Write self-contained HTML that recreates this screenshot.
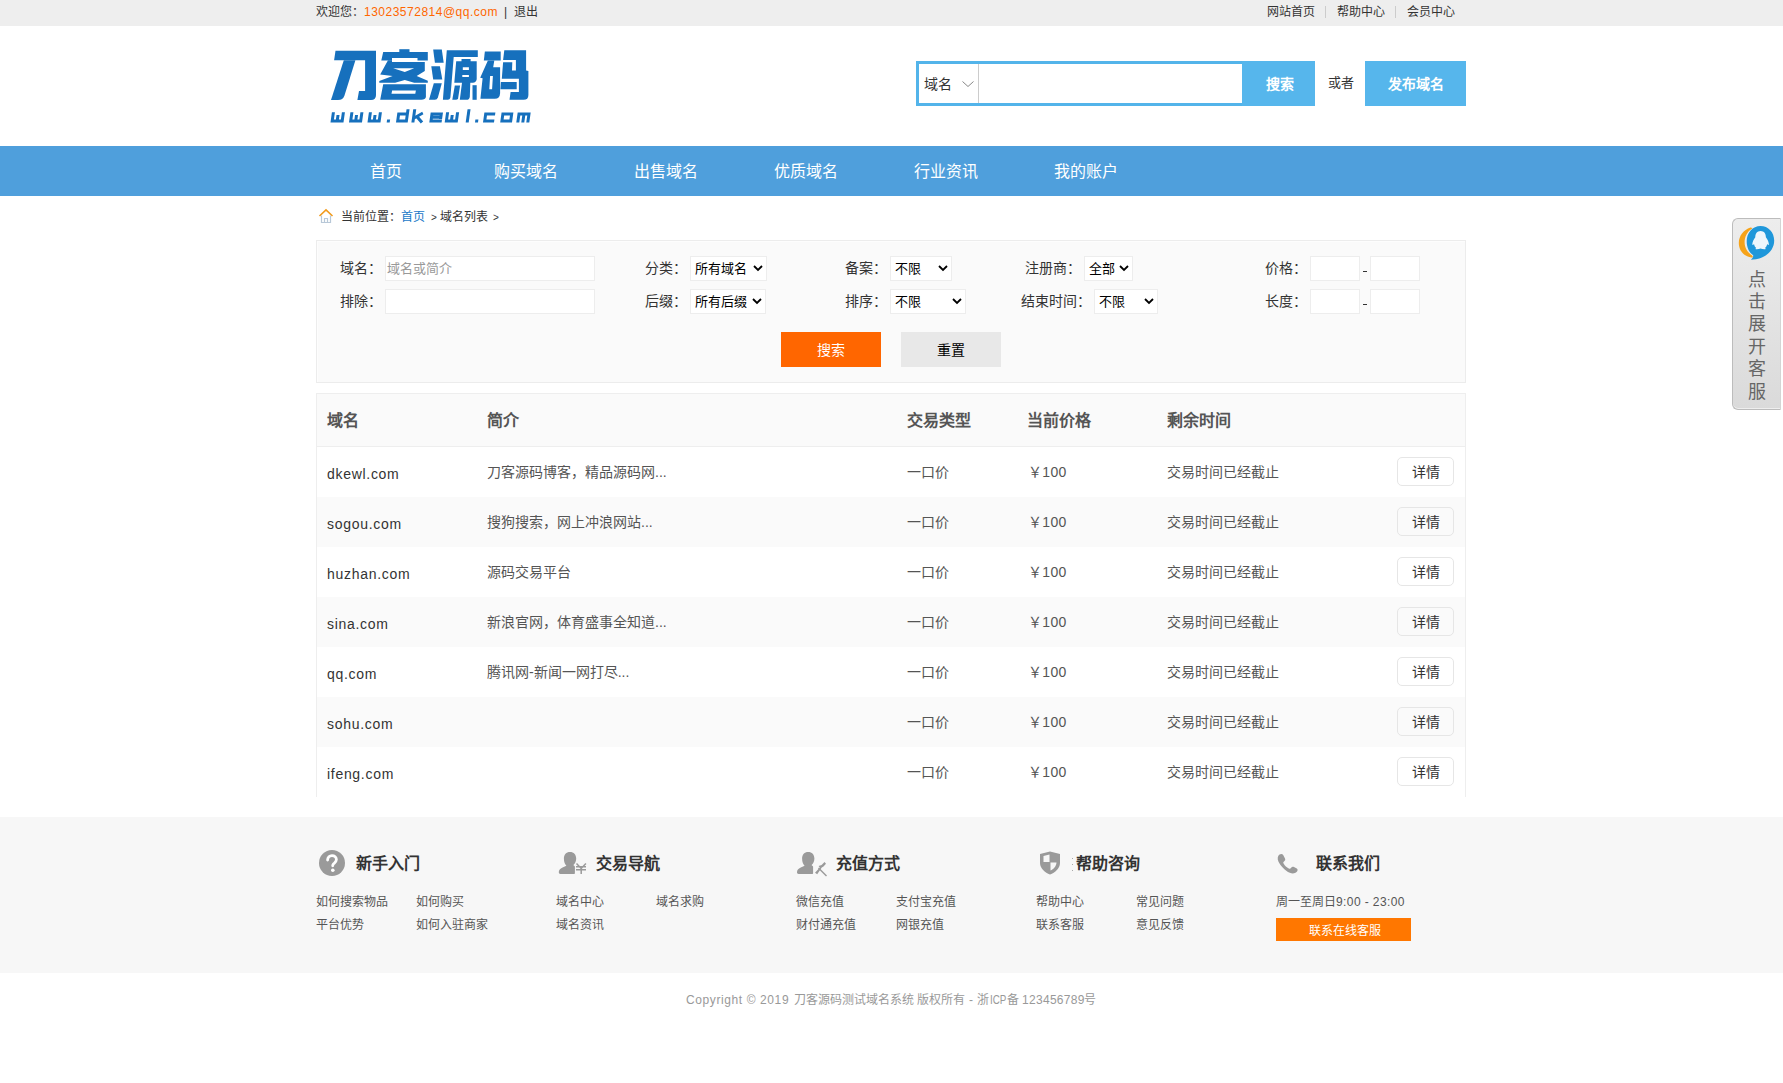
<!DOCTYPE html>
<html lang="zh-CN"><head><meta charset="utf-8">
<style>
*{margin:0;padding:0;box-sizing:border-box}
html,body{width:1783px;height:1083px;overflow:hidden;background:#fff}
body{font-family:"Liberation Sans",sans-serif;color:#333;position:relative;font-size:12px}
.abs{position:absolute;white-space:nowrap}
#top{position:absolute;left:0;top:0;width:1783px;height:26px;background:#eee}
#hdr{position:absolute;left:0;top:26px;width:1783px;height:120px;background:#fff}
#nav{position:absolute;left:0;top:146px;width:1783px;height:50px;background:#4f9fdc}
.nv{position:absolute;top:0;height:50px;line-height:52px;width:140px;text-align:center;color:#fff;font-size:16px}
#filter{position:absolute;left:316px;top:240px;width:1150px;height:143px;background:#fafafa;border:1px solid #ececec;box-shadow:inset 1px 1px 0 #fdfdfd}
.lbl{position:absolute;font-size:14px;color:#333;line-height:25px;white-space:nowrap}
.inp{position:absolute;background:#fff;border:1px solid #ededed;height:25px}
.sel{position:absolute;background:#fff;border:1px solid #ededed;height:25px;font-size:13px;line-height:23px;padding-left:4px;color:#000;white-space:nowrap}
.sel svg{position:absolute;top:8px}
#tbl{position:absolute;left:316px;top:393px;width:1150px;height:404px;border:1px solid #eee;border-bottom:none}
.th{position:absolute;top:0;height:53px;line-height:53px;font-size:16px;font-weight:bold;color:#555}
.row{position:absolute;left:0;width:1148px;height:50px}
.row.alt{background:#fafafa}
.cell{position:absolute;top:0;line-height:50px;font-size:14px;color:#555;white-space:nowrap}
.lat{letter-spacing:0.7px}
.btnd{position:absolute;left:1080px;top:10px;width:57px;height:29px;border:1px solid #e6e6e6;border-radius:5px;font-size:14px;line-height:28px;text-align:center;color:#333}
#foot{position:absolute;left:0;top:817px;width:1783px;height:156px;background:#f7f7f7}
.ft{position:absolute;font-size:16px;font-weight:bold;color:#333;white-space:nowrap;line-height:24px;margin:1px 0 0 0}
.fl{position:absolute;font-size:12px;color:#555;white-space:nowrap;line-height:16px;margin-top:2px}
</style></head>
<body>
<div id="top">
  <div class="abs" style="left:316px;top:0;line-height:24px;font-size:12px;color:#333">欢迎您：<span style="color:#ff6600;letter-spacing:0.5px">13023572814@qq.com</span><span style="margin-left:6px">|</span><span style="margin-left:7px">退出</span></div>
  <div class="abs" style="left:1267px;top:0;line-height:24px;font-size:12px;color:#333">网站首页</div>
  <div class="abs" style="left:1325px;top:6px;width:1px;height:12px;background:#ccc"></div>
  <div class="abs" style="left:1337px;top:0;line-height:24px;font-size:12px;color:#333">帮助中心</div>
  <div class="abs" style="left:1395px;top:6px;width:1px;height:12px;background:#ccc"></div>
  <div class="abs" style="left:1407px;top:0;line-height:24px;font-size:12px;color:#333">会员中心</div>
</div>
<div id="hdr"></div>
<!-- logo -->
<svg class="abs" style="left:0;top:0" width="560" height="140" viewBox="0 0 560 140"><g fill="#1670bd" fill-rule="evenodd">
<path d="M335.5,50.8 H376 V95 Q376,100 371,100 H357.4 L359,91 H365.1 V60.2 H334.1 Z"/>
<path d="M343.8,60.2 H355.4 L344.5,95.5 Q343,100 338,100 H331 Z"/>
<path d="M399.3,49.2 H409.5 V52.5 H399.3 Z"/>
<path d="M383.2,51.9 H427.8 V60.5 H417.5 V58 H392 V60.5 H381.3 Z"/>
<path d="M388,60.3 L392,60.3 L392,62 L424.8,62 L424.8,71 L416.7,76 L427.8,80.7 L427.8,82.7 L414.2,82.7 L404.8,79.9 L395.1,82.7 L379.3,82.7 L379.3,81 L392.6,76 L380.2,74.4 Z M393.2,68.3 L414.2,68.3 L404.8,72.1 Z"/>
<path d="M383.2,84.3 L425.9,84.3 L425.9,97.1 Q425.3,99.8 421.4,99.8 L380.2,99.8 Z M392.1,90.4 L415.9,90.4 L415.3,93.8 L391.5,93.8 Z"/>
<path d="M433.2,49.4 L441.8,49.4 L443.7,62.7 L434.9,62.7 Z"/>
<path d="M431.3,66.3 L439.9,66.3 L442.3,79.6 L433.2,79.6 Z"/>
<path d="M433.8,83.2 L441.8,83.2 L437.9,97.6 Q437.1,99.8 434.9,99.8 L429,99.8 Z"/>
<path d="M446.8,50.3 L477.8,50.3 L477.8,56.9 L453.7,56.9 L450.4,97.6 Q449.8,99.8 447.9,99.8 L442.9,99.8 Z"/>
<path d="M456.2,61.3 L461.5,61.3 L461.5,59.1 L470.6,59.1 L470.6,61.3 L476.7,61.3 L476.7,79.3 Q476.1,82.7 472.8,82.7 L470.3,82.7 L469.8,96.9 Q469.2,99.8 466.4,99.8 L459.8,99.8 L462,82.7 L454.3,82.7 Z M462.8,67.2 L468.9,67.2 L468.9,69.9 L462.8,69.9 Z M462.3,74.9 L468.9,74.9 L468.9,77.1 L462.3,77.1 Z"/>
<path d="M454.8,85.4 L460.1,85.4 L458.1,98.2 Q457.6,99.8 455.9,99.8 L452.3,99.8 Z"/>
<path d="M472.5,85.2 L476.7,85.2 L476.7,99.8 L472.5,99.8 Z"/>
<path d="M484.9,51.4 L500.7,51.4 L500.7,60.5 L483.8,60.5 Z"/>
<path d="M487.9,60.5 L494.3,60.5 L493.2,67.2 L500.1,67.2 L500.1,93.2 Q499.8,98.7 494.8,98.7 L480.4,98.7 L482.6,78.2 L480.2,77.7 Z M490.1,76 L492.9,76 L492.1,89.3 L489.3,89.3 Z"/>
<path d="M504.3,50.3 L526.1,50.3 L526.1,70.5 L528.4,71 L528.4,94.9 Q528.4,99.8 523.6,99.8 L509.5,99.8 L510.6,92.1 L518.9,92.1 L518.9,78.8 L501.8,78.8 L503.1,62.2 L512.3,62.2 L512,70.5 L515.9,70.5 L515.9,60 L503.1,60 Z"/>
<path d="M500.9,82.1 L516.7,82.1 L516.7,89.3 L500.4,89.3 Z"/>
</g>
<g transform="translate(17.2,0) skewX(-8)" fill="none" stroke="#1670bd" stroke-width="3"><path d="M332.0,112.3 V121 H342.0 V112.3 M337.0,115 V121"/><path d="M350.5,112.3 V121 H360.5 V112.3 M355.5,115 V121"/><path d="M369.0,112.3 V121 H379.0 V112.3 M374.0,115 V121"/><path d="M446.2,112.3 V121 H456.2 V112.3 M451.2,115 V121"/><path d="M406.2,109.3 V121 H397.5 V114 H406.2"/><path d="M412.9,109.3 V122.5 M413.5,118 L421.5,113 M416.5,117 L422,122.5"/><path d="M440.1,119 V114 H430.8 V121 H441.6 M430.8,117.3 H440.1"/><path d="M467.2,109.3 V122.5"/><path d="M494,114 H484.5 V121 H494"/><path d="M501.7,114 H510.5 V121 H501.7 Z"/><path d="M517.8,122.5 V114 H527.8 V122.5 M522.8,114 V122.5"/><rect x="386.7" y="119.5" width="3" height="3" fill="#1670bd" stroke="none"/><rect x="475" y="119.5" width="3" height="3" fill="#1670bd" stroke="none"/></g>
</svg>
<!-- search -->
<div class="abs" style="left:916px;top:61px;width:399px;height:45px;border:3px solid #53b4ea;background:#fff"></div>
<div class="abs" style="left:978px;top:64px;width:1px;height:39px;background:#ccc"></div>
<div class="abs" style="left:924px;top:62px;line-height:45px;font-size:14px;color:#333">域名</div>
<svg class="abs" style="left:962px;top:81px" width="12" height="7" viewBox="0 0 12 7"><path d="M0.5 0.5 L6 5.5 L11.5 0.5" fill="none" stroke="#888" stroke-width="1"/></svg>
<div class="abs" style="left:1242px;top:61px;width:73px;height:45px;background:#56b6ec;color:#fff;font-weight:bold;font-size:14px;line-height:47px;text-align:center;padding-left:2px">搜索</div>
<div class="abs" style="left:1328px;top:61px;line-height:44px;font-size:13px;color:#333">或者</div>
<div class="abs" style="left:1365px;top:61px;width:101px;height:45px;background:#56b6ec;color:#fff;font-weight:bold;font-size:14px;line-height:47px;text-align:center">发布域名</div>

<div id="nav">
  <div class="nv" style="left:316px">首页</div>
  <div class="nv" style="left:456px">购买域名</div>
  <div class="nv" style="left:596px">出售域名</div>
  <div class="nv" style="left:736px">优质域名</div>
  <div class="nv" style="left:876px">行业资讯</div>
  <div class="nv" style="left:1016px">我的账户</div>
</div>

<!-- breadcrumb -->
<svg class="abs" style="left:318px;top:208px" width="16" height="16" viewBox="0 0 16 16"><path d="M1.5 8 L8 1.8 L14.5 8" fill="none" stroke="#f29b1d" stroke-width="1.6"/><path d="M3.5 7.5 V14.5 H12.5 V7.5 M6.5 14.5 V10.5 H9.5 V14.5" fill="none" stroke="#b8c8d8" stroke-width="1.2"/></svg>
<div class="abs" style="left:341px;top:209px;line-height:16px;font-size:12px;color:#333">当前位置：</div>
<div class="abs" style="left:401px;top:209px;line-height:16px;font-size:12px;color:#1a78c8">首页</div>
<div class="abs" style="left:431px;top:210px;line-height:16px;font-size:10px;color:#333">&gt;</div>
<div class="abs" style="left:440px;top:209px;line-height:16px;font-size:12px;color:#333">域名列表</div>
<div class="abs" style="left:493px;top:210px;line-height:16px;font-size:10px;color:#333">&gt;</div>

<div id="filter"></div>
<div class="lbl" style="left:340px;top:256px">域名：</div>
<div class="inp" style="left:385px;top:256px;width:210px;font-size:13px;line-height:23px;color:#999;padding-left:1px">域名或简介</div>
<div class="lbl" style="left:340px;top:289px">排除：</div>
<div class="inp" style="left:385px;top:289px;width:210px"></div>

<div class="lbl" style="left:645px;top:256px">分类：</div>
<div class="sel" style="left:690px;top:256px;width:77px">所有域名<svg style="left:62px" width="10" height="7" viewBox="0 0 10 7"><path d="M1 1 L5 5 L9 1" fill="none" stroke="#000" stroke-width="1.8"/></svg></div>
<div class="lbl" style="left:645px;top:289px">后缀：</div>
<div class="sel" style="left:690px;top:289px;width:76px">所有后缀<svg style="left:61px" width="10" height="7" viewBox="0 0 10 7"><path d="M1 1 L5 5 L9 1" fill="none" stroke="#000" stroke-width="1.8"/></svg></div>

<div class="lbl" style="left:845px;top:256px">备案：</div>
<div class="sel" style="left:890px;top:256px;width:62px">不限<svg style="left:47px" width="10" height="7" viewBox="0 0 10 7"><path d="M1 1 L5 5 L9 1" fill="none" stroke="#000" stroke-width="1.8"/></svg></div>
<div class="lbl" style="left:845px;top:289px">排序：</div>
<div class="sel" style="left:890px;top:289px;width:76px">不限<svg style="left:61px" width="10" height="7" viewBox="0 0 10 7"><path d="M1 1 L5 5 L9 1" fill="none" stroke="#000" stroke-width="1.8"/></svg></div>

<div class="lbl" style="left:1025px;top:256px">注册商：</div>
<div class="sel" style="left:1084px;top:256px;width:49px">全部<svg style="left:34px" width="10" height="7" viewBox="0 0 10 7"><path d="M1 1 L5 5 L9 1" fill="none" stroke="#000" stroke-width="1.8"/></svg></div>
<div class="lbl" style="left:1021px;top:289px">结束时间：</div>
<div class="sel" style="left:1094px;top:289px;width:64px">不限<svg style="left:49px" width="10" height="7" viewBox="0 0 10 7"><path d="M1 1 L5 5 L9 1" fill="none" stroke="#000" stroke-width="1.8"/></svg></div>

<div class="lbl" style="left:1265px;top:256px">价格：</div>
<div class="inp" style="left:1310px;top:256px;width:50px"></div>
<div class="abs" style="left:1363px;top:271px;width:4px;height:1px;background:#333"></div>
<div class="inp" style="left:1370px;top:256px;width:50px"></div>
<div class="lbl" style="left:1265px;top:289px">长度：</div>
<div class="inp" style="left:1310px;top:289px;width:50px"></div>
<div class="abs" style="left:1363px;top:304px;width:4px;height:1px;background:#333"></div>
<div class="inp" style="left:1370px;top:289px;width:50px"></div>

<div class="abs" style="left:781px;top:332px;width:100px;height:35px;background:#ff6600;color:#fff;font-size:14px;line-height:37px;text-align:center">搜索</div>
<div class="abs" style="left:901px;top:332px;width:100px;height:35px;background:#e8e8e8;color:#000;font-size:14px;line-height:37px;text-align:center">重置</div>

<div id="tbl">
  <div class="abs" style="left:0;top:0;width:1148px;height:52px;background:#fafafa"></div>
  <div class="th" style="left:10px">域名</div>
  <div class="th" style="left:170px">简介</div>
  <div class="th" style="left:590px">交易类型</div>
  <div class="th" style="left:710px">当前价格</div>
  <div class="th" style="left:850px">剩余时间</div>
  <div class="abs" style="left:0;top:52px;width:1148px;height:1px;background:#eee"></div>
  <div class="row" style="top:53px"><div class="cell lat" style="left:10px;color:#333;top:1.5px">dkewl.com</div><div class="cell" style="left:170px">刀客源码博客，精品源码网...</div><div class="cell" style="left:590px">一口价</div><div class="cell" style="left:711px;top:0;letter-spacing:0.3px">￥100</div><div class="cell" style="left:850px">交易时间已经截止</div><div class="btnd">详情</div></div>
  <div class="row alt" style="top:103px"><div class="cell lat" style="left:10px;color:#333;top:1.5px">sogou.com</div><div class="cell" style="left:170px">搜狗搜索，网上冲浪网站...</div><div class="cell" style="left:590px">一口价</div><div class="cell" style="left:711px;top:0;letter-spacing:0.3px">￥100</div><div class="cell" style="left:850px">交易时间已经截止</div><div class="btnd">详情</div></div>
  <div class="row" style="top:153px"><div class="cell lat" style="left:10px;color:#333;top:1.5px">huzhan.com</div><div class="cell" style="left:170px">源码交易平台</div><div class="cell" style="left:590px">一口价</div><div class="cell" style="left:711px;top:0;letter-spacing:0.3px">￥100</div><div class="cell" style="left:850px">交易时间已经截止</div><div class="btnd">详情</div></div>
  <div class="row alt" style="top:203px"><div class="cell lat" style="left:10px;color:#333;top:1.5px">sina.com</div><div class="cell" style="left:170px">新浪官网，体育盛事全知道...</div><div class="cell" style="left:590px">一口价</div><div class="cell" style="left:711px;top:0;letter-spacing:0.3px">￥100</div><div class="cell" style="left:850px">交易时间已经截止</div><div class="btnd">详情</div></div>
  <div class="row" style="top:253px"><div class="cell lat" style="left:10px;color:#333;top:1.5px">qq.com</div><div class="cell" style="left:170px">腾讯网-新闻一网打尽...</div><div class="cell" style="left:590px">一口价</div><div class="cell" style="left:711px;top:0;letter-spacing:0.3px">￥100</div><div class="cell" style="left:850px">交易时间已经截止</div><div class="btnd">详情</div></div>
  <div class="row alt" style="top:303px"><div class="cell lat" style="left:10px;color:#333;top:1.5px">sohu.com</div><div class="cell" style="left:170px"></div><div class="cell" style="left:590px">一口价</div><div class="cell" style="left:711px;top:0;letter-spacing:0.3px">￥100</div><div class="cell" style="left:850px">交易时间已经截止</div><div class="btnd">详情</div></div>
  <div class="row" style="top:353px"><div class="cell lat" style="left:10px;color:#333;top:1.5px">ifeng.com</div><div class="cell" style="left:170px"></div><div class="cell" style="left:590px">一口价</div><div class="cell" style="left:711px;top:0;letter-spacing:0.3px">￥100</div><div class="cell" style="left:850px">交易时间已经截止</div><div class="btnd">详情</div></div>
</div>

<div id="foot"></div>
<!-- footer columns -->
<svg class="abs" style="left:319px;top:850px" width="26" height="26" viewBox="0 0 26 26"><circle cx="13" cy="13" r="13" fill="#9a9a9a"/><path d="M8.6,10 C8.6,7.2 10.6,5.6 13,5.6 C15.6,5.6 17.4,7.3 17.4,9.5 C17.4,11.6 15.8,12.6 14.6,13.8 C13.9,14.5 13.7,15.1 13.7,15.8" fill="none" stroke="#fff" stroke-width="2.8" stroke-linecap="round"/><circle cx="13.8" cy="20.3" r="1.8" fill="#fff"/></svg>
<div class="ft" style="left:356px;top:851px">新手入门</div>
<div class="fl" style="left:316px;top:892px">如何搜索物品</div>
<div class="fl" style="left:416px;top:892px">如何购买</div>
<div class="fl" style="left:316px;top:915px">平台优势</div>
<div class="fl" style="left:416px;top:915px">如何入驻商家</div>

<svg class="abs" style="left:558px;top:851px" width="30" height="26" viewBox="0 0 30 26"><path d="M12,0.9 C15.8,0.9 18.2,3.6 18.2,7.4 C18.2,10.4 17,12.4 15.6,13.7 L15.6,14.4 C16.4,14.7 16.9,15.1 16.9,15.8 L16.9,21.9 C16.9,22.5 16.5,22.9 15.9,22.9 L2.4,22.9 C1.4,22.9 0.8,22.2 0.8,21.2 C0.8,19 2,17.6 4.6,16.5 L8.4,14.8 C7,13.3 5.9,10.8 5.9,7.4 C5.9,3.6 8.2,0.9 12,0.9 Z" fill="#9a9a9a"/><path d="M18.5 12.4 L23.2 17.4 L27.9 12.4 M23.2 17.4 V22.9 M18 15.8 H28 M18 18.8 H28" fill="none" stroke="#9a9a9a" stroke-width="1.5"/></svg>
<div class="ft" style="left:596px;top:851px">交易导航</div>
<div class="fl" style="left:556px;top:892px">域名中心</div>
<div class="fl" style="left:656px;top:892px">域名求购</div>
<div class="fl" style="left:556px;top:915px">域名资讯</div>

<svg class="abs" style="left:797px;top:851px" width="30" height="26" viewBox="0 0 30 26"><g transform="translate(-0.8,0)"><path d="M12,0.9 C15.8,0.9 18.2,3.6 18.2,7.4 C18.2,10.4 17,12.4 15.6,13.7 L15.6,14.4 C16.4,14.7 16.9,15.1 16.9,15.8 L16.9,21.9 C16.9,22.5 16.5,22.9 15.9,22.9 L2.4,22.9 C1.4,22.9 0.8,22.2 0.8,21.2 C0.8,19 2,17.6 4.6,16.5 L8.4,14.8 C7,13.3 5.9,10.8 5.9,7.4 C5.9,3.6 8.2,0.9 12,0.9 Z" fill="#9a9a9a"/></g><path d="M21.5 17 L29.5 25" stroke="#9a9a9a" stroke-width="1.4"/><path d="M18 21.8 L22.8 16.4 L21.6 14.9 L24.6 13.9 L27.5 11 L29 12.8 L26.5 15.6 L24.8 16.6 L20.2 23.2 Z" fill="#9a9a9a"/></svg>
<div class="ft" style="left:836px;top:851px">充值方式</div>
<div class="fl" style="left:796px;top:892px">微信充值</div>
<div class="fl" style="left:896px;top:892px">支付宝充值</div>
<div class="fl" style="left:796px;top:915px">财付通充值</div>
<div class="fl" style="left:896px;top:915px">网银充值</div>

<svg class="abs" style="left:1039px;top:851px" width="22" height="24" viewBox="0 0 22 24"><path d="M11 0.5 L21 3 L21 12 C21 17.5 16 21.5 11 23.5 C6 21.5 1 17.5 1 12 L1 3 Z" fill="#9a9a9a"/><path d="M4.5 5 L10.5 3.6 L10.5 11 L4.5 11 Z M11.5 11.5 L17.5 11.5 C17.2 15.5 14.5 18.2 11.5 19.6 Z" fill="#f7f7f7"/></svg>
<div class="ft" style="left:1076px;top:851px">帮助咨询</div>
<div class="abs" style="left:1072px;top:858px;width:1px;height:1px;background:#aaa"></div><div class="abs" style="left:1072px;top:864px;width:1px;height:1px;background:#aaa"></div><div class="abs" style="left:1072px;top:870px;width:1px;height:1px;background:#aaa"></div>
<div class="fl" style="left:1036px;top:892px">帮助中心</div>
<div class="fl" style="left:1136px;top:892px">常见问题</div>
<div class="fl" style="left:1036px;top:915px">联系客服</div>
<div class="fl" style="left:1136px;top:915px">意见反馈</div>

<svg class="abs" style="left:1277px;top:853px" width="21" height="21" viewBox="0 0 21 21"><path d="M2.5 1.5 C4 0.5 5.5 0.8 6.2 2 L8 5.5 C8.6 6.8 8 7.6 7 8.4 C6.2 9 6 9.6 6.6 10.6 C8 13 9.5 14.5 11.8 15.6 C12.8 16.1 13.4 15.8 14 15 C14.8 13.9 15.6 13.4 17 14 L19.8 15.6 C21 16.4 20.8 17.8 19.8 18.8 C18 20.6 15.5 21 12.8 19.8 C8 17.6 3.8 13 1.4 8.4 C0.2 5.8 0.6 3 2.5 1.5 Z" fill="#9a9a9a"/></svg>
<div class="ft" style="left:1316px;top:851px">联系我们</div>
<div class="fl" style="left:1276px;top:892px">周一至周日<span style="letter-spacing:0.4px">9:00 - 23:00</span></div>
<div class="abs" style="left:1276px;top:918px;width:135px;height:23px;background:#ff7700;color:#fff;font-size:12px;line-height:23px;text-align:center"><span style="position:relative;left:1px;top:2px">联系在线客服</span></div>

<div class="abs" style="left:0;top:992px;width:1783px;height:16px;font-size:12px;line-height:16px;color:#999"><span class="abs" style="left:686px;top:0;letter-spacing:0.6px">Copyright © 2019</span><span class="abs" style="left:794px;top:0;">刀客源码测试域名系统</span><span class="abs" style="left:917px;top:0;">版权所有</span><span class="abs" style="left:969px;top:0;">-</span><span class="abs" style="left:977px;top:0;">浙</span><span class="abs" style="left:990px;top:0;transform:scaleX(0.82);transform-origin:0 0">ICP</span><span class="abs" style="left:1007px;top:0;">备</span><span class="abs" style="left:1022px;top:0;letter-spacing:0.3px">123456789</span><span class="abs" style="left:1084px;top:0;">号</span></div>

<!-- side widget -->
<div class="abs" style="left:1732px;top:218px;width:49px;height:192px;border:1px solid #bcbcbc;border-right-color:#d4d4d4;border-radius:6px 0 0 6px;background:linear-gradient(#ededed,#dadada);box-shadow:inset 0 -1px 0 #eee"></div>
<svg class="abs" style="left:1732px;top:220px" width="51" height="45" viewBox="1732 220 51 45">
<path d="M1750.5,227.6 C1743.5,230 1738.8,236 1738.8,243 C1738.8,250.5 1744,256.5 1751.5,257.6 C1752.8,257.7 1753.2,256.6 1752.3,255.7 C1747,252 1744.6,247.5 1744.6,242.3 C1744.6,236.8 1747.3,231.5 1752.2,228.6 C1751.9,227.8 1751.3,227.5 1750.5,227.6 Z" fill="#f6a31a"/>
<path d="M1760.5,225.9 C1768.3,225.9 1774.2,232.2 1774.2,240.6 C1774.2,250.2 1766.5,257.5 1756,259.2 L1750.8,259.8 C1752.6,258.3 1753.4,256.8 1753.2,255.3 C1749,252.6 1746.7,247.2 1746.7,241.3 C1746.7,232.6 1752.7,225.9 1760.5,225.9 Z" fill="#1f97da"/>
<path d="M1760.6,231 C1757,231 1755.3,233.8 1755.3,237.2 C1753.6,239.2 1752.3,242 1752.3,244.5 C1752.5,245.3 1753.3,245 1754,244 C1754.3,246 1755.2,247.2 1756.2,248 C1755.1,248.6 1755.2,249.3 1756.8,249.3 C1758.3,249.3 1759.6,249 1760.6,248.6 C1761.6,249 1762.9,249.3 1764.4,249.3 C1766,249.3 1766.1,248.6 1765,248 C1766,247.2 1766.9,246 1767.2,244 C1767.9,245 1768.7,245.3 1768.9,244.5 C1768.9,242 1767.6,239.2 1765.9,237.2 C1765.9,233.8 1764.2,231 1760.6,231 Z" fill="#eef6fc"/>
</svg>
<div class="abs" style="left:1747px;top:268.6px;width:20px;font-size:18px;line-height:22.4px;color:#666;white-space:normal;text-align:center">点击展开客服</div>
</body></html>
